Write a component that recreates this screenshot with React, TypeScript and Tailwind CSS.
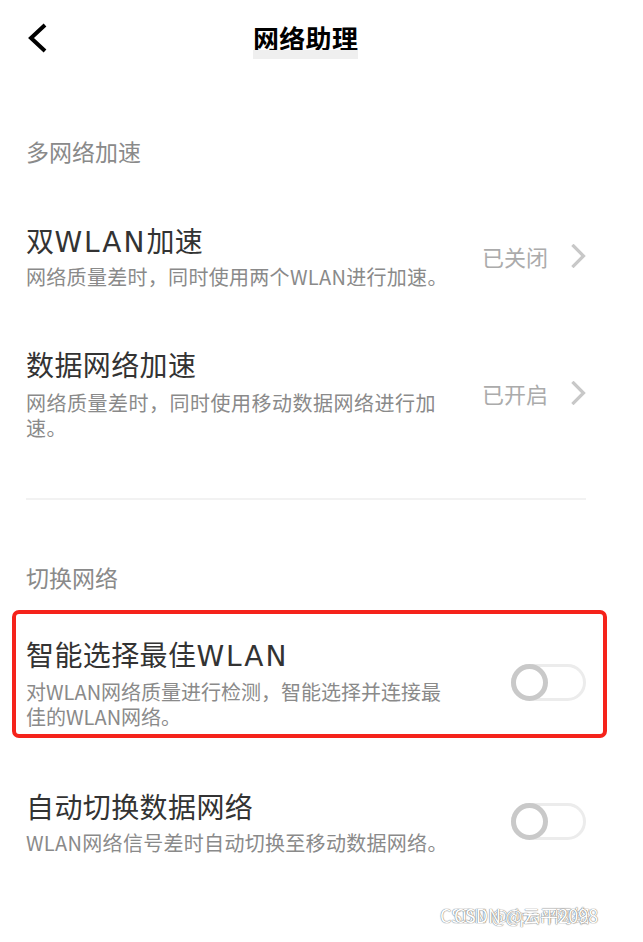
import React from "react";

function Chevron() {
  return (
    <svg width="15" height="24" viewBox="0 0 15 24" className="shrink-0">
      <path d="M2.5 2 L12.5 12 L2.5 22" fill="none" stroke="#c8c8c8" strokeWidth="3.2" strokeLinecap="square" strokeLinejoin="miter" />
    </svg>
  );
}

function Toggle() {
  return (
    <div className="relative w-[75px] h-[37px] shrink-0 rounded-full border-[3px] border-[#ececec] bg-white">
      <div className="absolute -left-[3px] -top-[3px] w-[37px] h-[37px] rounded-full border-[5px] border-[#c9c9c9] bg-white" />
    </div>
  );
}

function W() {
  return <span className="font-['DejaVu_Sans',sans-serif] tracking-[2px] leading-none">WLAN</span>;
}

export default function App() {
  return (
    <div className="relative w-[643px] h-[942px] overflow-hidden bg-white font-['Noto_Sans_CJK_SC','Noto_Sans',sans-serif]">
      {/* header */}
      <div className="flex items-start h-[60px] pt-[23px] pl-[26px]">
        <svg width="22" height="30" viewBox="0 0 22 30" className="shrink-0">
          <path d="M19 2 L5 15 L19 28" fill="none" stroke="#000" strokeWidth="4" strokeLinecap="butt" strokeLinejoin="miter" />
        </svg>
        <div className="ml-[205px] mt-[3px] flex flex-col">
          <div className="text-[26px] leading-[24px] font-bold text-black tracking-[0.3px]">网络助理</div>
          <div className="h-[9px] bg-[#efefef]" />
        </div>
      </div>

      <div className="pl-[26px] w-[586px] flex flex-col">
        <div className="mt-[76px] text-[23px] leading-[30px] text-[#8a8a8a]">多网络加速</div>

        {/* row 1 */}
        <div className="mt-[56px] flex items-center justify-between">
          <div className="flex flex-col">
            <div className="h-[36px] text-[28px] leading-[36px] text-[#333] tracking-[0.4px]">双<W />加速</div>
            <div className="mt-[6px] text-[20px] leading-[25px] text-[#8a8a8a] tracking-[0.3px] whitespace-nowrap">
              网络质量差时，同时使用两个WLAN进行加速。
            </div>
          </div>
          <div className="flex items-center gap-[23px]">
            <span className="text-[22px] leading-[28px] text-[#ababab]">已关闭</span>
            <Chevron />
          </div>
        </div>

        {/* row 2 */}
        <div className="mt-[57px] flex items-center justify-between">
          <div className="flex flex-col">
            <div className="text-[28px] leading-[36px] text-[#333] tracking-[0.4px]">数据网络加速</div>
            <div className="mt-[8px] text-[20px] leading-[25px] text-[#8a8a8a] tracking-[0.5px] whitespace-nowrap">
              网络质量差时，同时使用移动数据网络进行加
              <br />
              速。
            </div>
          </div>
          <div className="flex items-center gap-[23px]">
            <span className="text-[22px] leading-[28px] text-[#ababab]">已开启</span>
            <Chevron />
          </div>
        </div>

        <div className="mt-[58px] h-[2px] bg-[#f2f2f2]" />

        <div className="mt-[62px] text-[23px] leading-[30px] text-[#8a8a8a]">切换网络</div>

        {/* row 3 */}
        <div className="relative mt-[44px] flex items-center justify-between">
          <div className="absolute -left-[14px] -right-[21px] -top-[26px] -bottom-[9px] rounded-[7px] border-[4px] border-[#f5231b] pointer-events-none" />
          <div className="flex flex-col">
            <div className="h-[36px] text-[28px] leading-[36px] text-[#333] tracking-[0.4px]">智能选择最佳<W /></div>
            <div className="mt-[7px] text-[20px] leading-[25px] text-[#8a8a8a] tracking-[0px] whitespace-nowrap">
              对WLAN网络质量进行检测，智能选择并连接最
              <br />
              佳的WLAN网络。
            </div>
          </div>
          <Toggle />
        </div>

        {/* row 4 */}
        <div className="mt-[59px] flex items-center justify-between">
          <div className="flex flex-col">
            <div className="text-[28px] leading-[36px] text-[#333] tracking-[0.4px]">自动切换数据网络</div>
            <div className="mt-[6px] text-[20px] leading-[25px] text-[#8a8a8a] tracking-[0.3px] whitespace-nowrap">
              WLAN网络信号差时自动切换至移动数据网络。
            </div>
          </div>
          <Toggle />
        </div>
      </div>

      {/* watermark */}
      <div className="absolute left-[440px] top-[903px] text-[18px] leading-[24px] whitespace-nowrap text-white [text-shadow:0_0_1px_#777,0_0_1px_#777]">
        <span className="absolute left-0 top-0">CSDN @dparr网络</span>
        <span className="relative left-[14px]">CSDN @云平2098</span>
      </div>
    </div>
  );
}
